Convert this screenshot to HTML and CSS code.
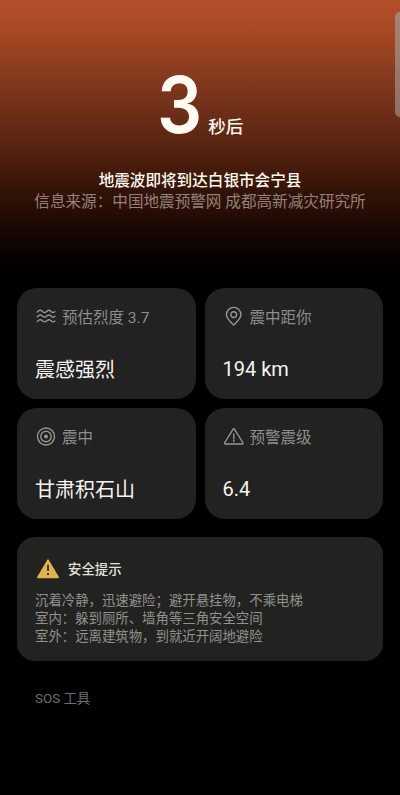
FILE: index.html
```html
<!DOCTYPE html>
<html lang="zh-CN">
<head>
<meta charset="utf-8">
<title>地震预警</title>
<link rel="stylesheet" href="styles.css">
</head>
<body>
<main class="screen">
  <div class="edge-handle"></div>
  <header class="alert">
    <div class="countdown"><span class="seconds">3</span><span class="unit">秒后</span></div>
    <h1 class="headline">地震波即将到达白银市会宁县</h1>
    <p class="source">信息来源：中国地震预警网 成都高新减灾研究所</p>
  </header>
  <section class="grid">
    <article class="card">
      <div class="label">
        <svg class="icon" viewBox="0 0 22 22"><path d="M2.300 7q1.600-1.700 3-1.700c2 0 2.300 2.200 4.300 2.200s2.300-2.200 4.300-2.200 2.300 2.200 4.300 2.200q.9 0 1.700-.9M2.300 11.700q1.600-1.700 3-1.700c2 0 2.300 2.200 4.300 2.200s2.300-2.200 4.300-2.200 2.300 2.200 4.300 2.200q.9 0 1.700-.9M2.300 16.400q1.600-1.700 3-1.700c2 0 2.300 2.200 4.300 2.200s2.300-2.200 4.300-2.200 2.300 2.200 4.300 2.200q.9 0 1.700-.9"/></svg>
        <span>预估烈度 3.7</span>
      </div>
      <div class="value">震感强烈</div>
    </article>
    <article class="card">
      <div class="label">
        <svg class="icon" viewBox="0 0 22 22"><path d="M10.700 20C8 17.500 3.500 13.900 3.500 9.600a7.200 7.200 0 0 1 14.400 0C17.900 13.900 13.400 17.500 10.700 20z"/><circle cx="10.700" cy="9.600" r="2.900"/></svg>
        <span>震中距你</span>
      </div>
      <div class="value numeric">194 km</div>
    </article>
    <article class="card">
      <div class="label">
        <svg class="icon" viewBox="0 0 22 22"><circle cx="11" cy="11.500" r="8.500"/><circle cx="11" cy="11.500" r="5.200"/><circle class="dot" cx="11" cy="11.500" r="2"/></svg>
        <span>震中</span>
      </div>
      <div class="value">甘肃积石山</div>
    </article>
    <article class="card">
      <div class="label">
        <svg class="icon" viewBox="0 0 22 22"><path d="M10 4.300a.9.900 0 0 1 1.600 0l8.200 13.200a.9.900 0 0 1-.8 1.500H2.600a.9.900 0 0 1-.8-1.500zM10.800 9v4.700M10.800 15.200v1.300"/></svg>
        <span>预警震级</span>
      </div>
      <div class="value numeric">6.4</div>
    </article>
  </section>
  <section class="tips">
    <div class="tips-head">
      <svg class="warning" viewBox="0 0 24 20"><path class="sign" d="M12.500 2 22.300 18.500H2.700z"/><path class="mark" d="M12.500 6.500v6M12.500 14.200v2"/></svg>
      <h2 class="tips-title">安全提示</h2>
    </div>
    <p class="tip">沉着冷静，迅速避险；避开悬挂物，不乘电梯</p>
    <p class="tip">室内：躲到厕所、墙角等三角安全空间</p>
    <p class="tip">室外：远离建筑物，到就近开阔地避险</p>
  </section>
  <h2 class="sos">SOS 工具</h2>
</main>
</body>
</html>
```
FILE: styles.css
```css
* {
  box-sizing: border-box;
  margin: 0;
  padding: 0;
}

body {
  background: #000;
  font-family: Roboto, "Noto Sans CJK SC", sans-serif;
}

h1, h2 {
  font-weight: 400;
}

.screen {
  position: relative;
  height: 795px;
  padding: 0 17px;
  overflow: hidden;
  background: linear-gradient(#b44e2a 0, #ac4b25 22px, #99421f 50px, #873a1f 75px, #6f2f18 110px, #582412 145px, #491c0c 165px, #341307 190px, #220b04 218px, #120501 240px, #040100 262px, #000 280px);
}

.edge-handle {
  position: absolute;
  top: 12px;
  right: 0;
  width: 5px;
  height: 105px;
  border-radius: 5px 0 0 5px;
  background: linear-gradient(#a98374, #8e7065);
}

.alert {
  height: 288px;
  padding-top: 65px;
  text-align: center;
  color: #fffaf2;
}

.countdown {
  display: flex;
  justify-content: center;
  align-items: baseline;
  height: 106px;
  gap: 4px;
}

.seconds {
  font-family: Inter, Roboto, sans-serif;
  font-size: 78px;
  font-weight: 600;
  line-height: 80px;
  letter-spacing: -2px;
  transform: scaleX(.91);
  transform-origin: 0 50%;
}

.unit {
  font-size: 17.5px;
  font-weight: 500;
}

.headline {
  font-size: 15.6px;
  font-weight: 500;
  line-height: 21px;
}

.source {
  font-size: 15.6px;
  line-height: 21px;
  color: #94817a;
  white-space: nowrap;
}

.grid {
  display: grid;
  grid-template-columns: 178.500px 178.500px;
  grid-auto-rows: 111px;
  gap: 9px;
}

.card {
  padding: 17px 18px;
  border-radius: 20px;
  background: #212221;
}

.label {
  display: flex;
  align-items: center;
  gap: 5px;
  height: 22px;
  font-size: 15.5px;
  color: #8e8e8b;
}

.icon {
  width: 22px;
  height: 22px;
  fill: none;
  stroke: #969693;
  stroke-width: 1.400;
  stroke-linecap: round;
  stroke-linejoin: round;
}

.icon .dot {
  fill: #969693;
  stroke: none;
}

.value {
  margin-top: 28px;
  font-size: 20px;
  line-height: 30px;
  color: #f7f3ee;
}

.value.numeric {
  margin-top: 27px;
}

.tips {
  height: 124px;
  margin-top: 18px;
  padding: 20px 18px 0;
  border-radius: 18px;
  background: #222321;
}

.tips-head {
  display: flex;
  align-items: center;
  gap: 8px;
  height: 22px;
  margin-bottom: 13px;
}

.warning {
  width: 25px;
  height: 21px;
}

.sign {
  fill: #dfb44e;
  stroke: #dfb44e;
  stroke-width: 1.500;
  stroke-linejoin: round;
}

.mark {
  fill: none;
  stroke: #38301e;
  stroke-width: 1.800;
}

.tips-title {
  font-size: 13.4px;
  font-weight: 500;
  color: #e2e0da;
}

.tip {
  font-size: 13.4px;
  line-height: 18px;
  color: #91918d;
  white-space: nowrap;
}

.sos {
  margin: 29px 18px 0;
  font-size: 13.4px;
  line-height: 18px;
  color: #6e6e6e;
}
```
